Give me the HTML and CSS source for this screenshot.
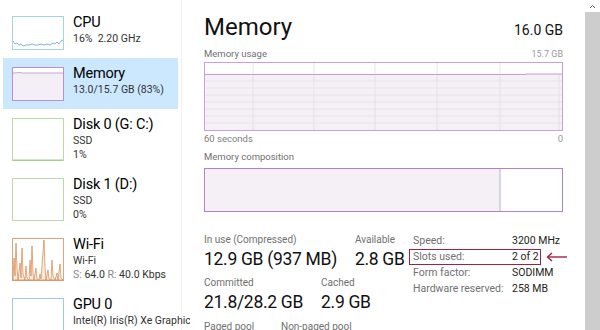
FILE: index.html
```html
<!DOCTYPE html>
<html>
<head>
<meta charset="utf-8">
<link rel="stylesheet" href="styles.css">
</head>
<body>
<div class="sidebar">
  <div class="item">
    <svg class="thumb" viewBox="0 0 52 34"><rect x="0.5" y="0.5" width="51" height="33" fill="#fff" stroke="#a9d1ea"/><polyline fill="none" stroke="#5fa3d3" stroke-width="0.8" points="1,25 3,28 5,27 7,29 9,28 11,30 14,29 17,29 20,28 23,29 26,29 29,28 32,29 35,28 38,29 41,27 43,28 45,26 47,28 49,25 51,24"/></svg>
    <div class="info"><div class="title">CPU</div><div class="sub">16%&nbsp; 2.20 GHz</div></div>
  </div>
  <div class="item sel">
    <svg class="thumb" viewBox="0 0 52 34"><rect x="0.5" y="0.5" width="51" height="33" fill="#fff" stroke="#b98fd0"/><rect x="1" y="6" width="50" height="27" fill="#f4eef7"/><polyline fill="none" stroke="#b98fd0" stroke-width="0.8" points="1,6 8,5.5 10,6 51,6"/></svg>
    <div class="info"><div class="title">Memory</div><div class="sub">13.0/15.7 GB (83%)</div></div>
  </div>
  <div class="item">
    <svg class="thumb tall" viewBox="0 0 52 43"><rect x="0.5" y="0.5" width="51" height="42" fill="#fff" stroke="#bcd9a6"/><line x1="1" y1="42" x2="51" y2="42" stroke="#8dbd6a" stroke-width="0.8"/></svg>
    <div class="info"><div class="title">Disk 0 (G: C:)</div><div class="sub">SSD</div><div class="sub">1%</div></div>
  </div>
  <div class="item">
    <svg class="thumb tall" viewBox="0 0 52 43"><rect x="0.5" y="0.5" width="51" height="42" fill="#fff" stroke="#bcd9a6"/></svg>
    <div class="info"><div class="title">Disk 1 (D:)</div><div class="sub">SSD</div><div class="sub">0%</div></div>
  </div>
  <div class="item">
    <svg class="thumb tall" viewBox="0 0 52 43"><rect x="0.5" y="0.5" width="51" height="42" fill="#fff" stroke="#dea47a"/><polygon fill="#fbeadd" stroke="#d4874f" stroke-width="0.7" points="1,42 2,20 3,38 4,5 5,30 6,42 8,25 9,40 10,10 11,36 13,42 14,28 15,40 17,42 18,22 19,38 20,8 21,34 22,42 24,30 25,41 27,42 28,36 29,41 31,14 32,2 33,30 34,42 36,32 37,41 39,42 40,22 41,38 43,42 45,35 46,42 48,26 49,40 51,42"/></svg>
    <div class="info"><div class="title">Wi-Fi</div><div class="sub">Wi-Fi</div><div class="sub"><span class="dim">S:</span> 64.0 <span class="dim">R:</span> 40.0 Kbps</div></div>
  </div>
  <div class="item">
    <svg class="thumb tall" viewBox="0 0 52 43"><rect x="0.5" y="0.5" width="51" height="42" fill="#fff" stroke="#9fc9e8"/></svg>
    <div class="info"><div class="title">GPU 0</div><div class="sub clip">Intel(R) Iris(R) Xe Graphics</div><div class="sub">4%</div></div>
  </div>
</div>

<div class="main">
  <div class="head"><div class="h1">Memory</div><div class="total">16.0 GB</div></div>
  <div class="cap-row"><span>Memory usage</span><span class="small">15.7 GB</span></div>
  <div class="graph">
    <svg class="fill" viewBox="0 0 357 67" preserveAspectRatio="none">
      <rect x="0" y="11" width="357" height="56" fill="#f4f0f6"/>
      <g stroke="#e6e0ea" stroke-width="0.8">
        <line x1="0" y1="18" x2="357" y2="18"/><line x1="0" y1="25" x2="357" y2="25"/>
        <line x1="0" y1="32" x2="357" y2="32"/><line x1="0" y1="39" x2="357" y2="39"/>
        <line x1="0" y1="46" x2="357" y2="46"/><line x1="0" y1="53" x2="357" y2="53"/>
        <line x1="0" y1="60" x2="357" y2="60"/>
      </g>
      <g stroke="#e2dce6" stroke-width="0.8">
        <line x1="48" y1="0" x2="48" y2="67"/><line x1="109" y1="0" x2="109" y2="67"/>
        <line x1="170" y1="0" x2="170" y2="67"/><line x1="232" y1="0" x2="232" y2="67"/>
        <line x1="295" y1="0" x2="295" y2="67"/><line x1="354" y1="11" x2="354" y2="67"/>
      </g>
      <polyline fill="none" stroke="#c39bd6" stroke-width="1" points="0,11.5 320,11.5 322,11 357,11"/>
    </svg>
  </div>
  <div class="cap-row small-row"><span>60 seconds</span><span>0</span></div>
  <div class="cap-row comp-label"><span>Memory composition</span></div>
  <div class="comp"><div class="used"></div><div class="free"></div></div>

  <div class="stats">
    <div class="lstats">
      <div class="row">
        <div class="stat"><div class="lab">In use (Compressed)</div><div class="val">12.9 GB (937 MB)</div></div>
        <div class="stat"><div class="lab">Available</div><div class="val">2.8 GB</div></div>
      </div>
      <div class="row r2">
        <div class="stat"><div class="lab">Committed</div><div class="val">21.8/28.2 GB</div></div>
        <div class="stat"><div class="lab">Cached</div><div class="val">2.9 GB</div></div>
      </div>
      <div class="row r3">
        <div class="stat paged"><div class="lab">Paged pool</div><div class="val">1.1 GB</div></div>
        <div class="stat"><div class="lab">Non-paged pool</div><div class="val">1.3 GB</div></div>
      </div>
    </div>
    <div class="details">
      <div class="drow"><span class="dl">Speed:</span><span class="dv">3200 MHz</span></div>
      <div class="drow hl"><span class="dl">Slots used:</span><span class="dv">2 of 2</span>
        <svg class="arrow" viewBox="0 0 22 10"><line x1="2" y1="5" x2="21" y2="5" stroke="#a3203f" stroke-width="1.4"/><polyline points="6,1 1.5,5 6,9" fill="none" stroke="#a3203f" stroke-width="1.4"/></svg>
      </div>
      <div class="drow"><span class="dl">Form factor:</span><span class="dv">SODIMM</span></div>
      <div class="drow"><span class="dl">Hardware reserved:</span><span class="dv">258 MB</span></div>
    </div>
  </div>
</div>

<div class="scroll">
  <div class="sbtn"><svg viewBox="0 0 15 12"><polyline points="5,8 7.5,5.5 10,8" fill="none" stroke="#606060" stroke-width="1"/></svg></div>
  <div class="track"></div>
</div>
</body>
</html>
```

FILE: styles.css
```css
* { box-sizing: border-box; }
body {
  margin: 0;
  width: 600px;
  height: 330px;
  overflow: hidden;
  display: flex;
  background: #fff;
  font-family: Roboto, "Open Sans", sans-serif;
  color: #111;
}
.sidebar {
  width: 182px;
  flex: none;
  border-right: 1px solid #f0f0f0;
  padding-top: 7px;
}
.item {
  display: flex;
  gap: 9px;
  margin-left: 3px;
  width: 175px;
  padding: 9px 0 8px 9px;
}
.item.sel { background: #cce8ff; }
.thumb { width: 52px; height: 34px; flex: none; display: block; }
.thumb.tall { height: 43px; }
.info { min-width: 0; white-space: nowrap; }
.title {
  font-size: 14.5px;
  line-height: 18px;
  margin-top: -2px;
  letter-spacing: -0.2px;
  color: #000;
}
.sub {
  font-size: 10.5px;
  line-height: 13.5px;
  color: #333;
}
.sub.clip { width: 117px; overflow: hidden; }
.dim { color: #888; }

.main {
  width: 403px;
  flex: none;
  padding: 12px 22px 0;
}
.head {
  display: flex;
  justify-content: space-between;
  align-items: baseline;
  height: 30px;
}
.h1 { font-size: 24px; line-height: 30px; color: #111; }
.total { font-size: 14px; color: #111; }
.cap-row {
  display: flex;
  justify-content: space-between;
  font-size: 9.5px;
  line-height: 12px;
  color: #707070;
  margin-top: 6px;
}
.small { font-size: 9px; color: #999; }
.graph {
  margin-top: 2px;
  height: 69px;
  border: 1px solid #c99fdc;
  background: #fff;
}
.fill { display: block; width: 100%; height: 100%; }
.small-row { margin-top: 2px; color: #808080; }
.small-row span:last-child { color: #999; }
.comp-label { margin-top: 6px; }
.comp {
  margin-top: 5px;
  height: 44px;
  border: 1px solid #b57fd0;
  display: flex;
}
.comp .used {
  width: 296px;
  background: #f4f0f6;
  border-right: 2px solid #dcd2e2;
}
.comp .free { flex: 1; background: #fff; }

.stats { display: flex; margin-top: 22px; }
.lstats { width: 205px; flex: none; }
.row { display: flex; gap: 18px; }
.row.r2 { margin-top: 7px; }
.row.r3 { margin-top: 8px; }
.lab { font-size: 10px; line-height: 12px; color: #707070; white-space: nowrap; }
.val { font-size: 17.5px; line-height: 22px; margin-top: 2px; letter-spacing: -0.3px; color: #111; white-space: nowrap; }
.paged { width: 59px; }

.details { margin-top: -1px; }
.drow {
  position: relative;
  display: grid;
  grid-template-columns: 99px auto;
  width: 132px;
  padding-left: 4px;
  font-size: 10.5px;
  line-height: 16px;
  white-space: nowrap;
}
.dl { color: #707070; }
.dv { color: #222; }
.drow.hl { outline: 1.5px solid #a3203f; outline-offset: -1.5px; }
.arrow {
  position: absolute;
  left: 137px;
  top: 3px;
  width: 22px;
  height: 10px;
}
.scroll {
  width: 15px;
  flex: none;
  display: flex;
  flex-direction: column;
}
.sbtn { height: 12px; }
.sbtn svg { display: block; width: 15px; height: 12px; }
.track { flex: 1; background: #cdcdcd; }
```
